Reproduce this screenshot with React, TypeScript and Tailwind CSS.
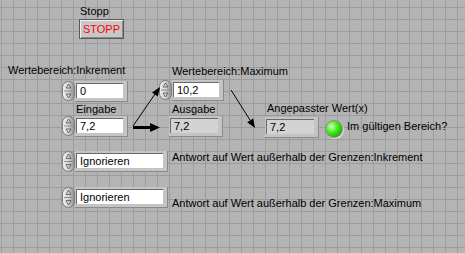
import React from "react";

function Spinner({ h = 20 }: { h?: number }) {
  return (
    <svg className="shrink-0" width={13} height={h} viewBox={`0 0 13 ${h}`}>
      <defs>
        <linearGradient id="sp" x1="0" x2="1" y1="0" y2="0">
          <stop offset="0" stopColor="#f2f2f2" />
          <stop offset="0.5" stopColor="#d2d2d2" />
          <stop offset="1" stopColor="#8a8a8a" />
        </linearGradient>
      </defs>
      <rect x={0.5} y={0.5} width={12} height={h - 1} rx={6} fill="url(#sp)" stroke="#7a7a7a" />
      <line x1={2} x2={11} y1={h / 2} y2={h / 2} stroke="#8c8c8c" />
      <path d={`M6.5 3 L9 ${h / 2 - 3} L4 ${h / 2 - 3} Z`} fill="none" stroke="#555" strokeWidth={0.8} />
      <path d={`M6.5 ${h - 3} L9 ${h / 2 + 3} L4 ${h / 2 + 3} Z`} fill="none" stroke="#555" strokeWidth={0.8} />
    </svg>
  );
}

// numeric / ring box with the classic LabVIEW bevel
function Box({ w, value, indicator = false }: { w: string; value: string; indicator?: boolean }) {
  return (
    <div className={`h-[21px] ${w} shrink-0 bg-[#c4c4c4] pl-[1px] pt-[2px] pr-[4px] pb-[3px] border-r border-b border-[#8a8a8a]`}>
      <div
        className={`h-full border-t border-l border-[#6a6a6a] pl-[3px] leading-[14px] ${
          indicator ? "bg-[#d3d3d3]" : "bg-white"
        }`}
      >
        {value}
      </div>
    </div>
  );
}

function Led() {
  return (
    <div className="h-[18px] w-[18px] shrink-0 rounded-full bg-[#8c8c8c] p-[1px] shadow-[1px_1px_0_#e0e0e0]">
      <div className="h-full w-full rounded-full bg-[radial-gradient(circle_at_35%_35%,#d8ffc0_0%,#52f02a_35%,#1fb400_75%,#138000_100%)]" />
    </div>
  );
}

export default function App() {
  return (
    <div className="relative h-[253px] w-[465px] overflow-hidden bg-[#b4b4b4] bg-[linear-gradient(to_right,#9c9c9c_1px,transparent_1px),linear-gradient(to_bottom,#9c9c9c_1px,transparent_1px)] bg-size-[12px_12px] bg-position-[1px_7px] font-['Liberation_Sans',Arial,sans-serif] text-[11px] leading-[13px] text-black">
      {/* Stopp-Taste */}
      <div className="absolute left-[79px] top-[5px] flex flex-col items-start">
        <span className="pl-[1px]">Stopp</span>
        <button className="mt-[1px] h-[20px] w-[45px] border border-[#5a5a5a] bg-[#c8c8c8] pt-[1px] text-[11px] leading-[13px] text-[#ff0000] shadow-[inset_1px_1px_0_#f0f0f0,inset_-1px_-1px_0_#8a8a8a]">
          STOPP
        </button>
      </div>

      <span className="absolute left-[8px] top-[64px] whitespace-nowrap">Wertebereich:Inkrement</span>

      {/* linke Spalte: Inkrement, Eingabe, Ringe */}
      <div className="absolute left-[62px] top-[81px] flex flex-col">
        <div className="flex">
          <Spinner />
          <Box w="w-[53px]" value="0" />
        </div>
        <span className="mt-[1px] pl-[14px]">Eingabe</span>
        <div className="flex">
          <Spinner />
          <Box w="w-[53px]" value="7,2" />
        </div>
        <div className="mt-[14px] flex">
          <Spinner h={21} />
          <Box w="w-[93px]" value="Ignorieren" />
          <span className="ml-[4px] self-start whitespace-nowrap">Antwort auf Wert außerhalb der Grenzen:Inkrement</span>
        </div>
        <div className="mt-[15px] flex">
          <Spinner h={21} />
          <Box w="w-[93px]" value="Ignorieren" />
          <span className="ml-[4px] mt-[10px] self-start whitespace-nowrap">Antwort auf Wert außerhalb der Grenzen:Maximum</span>
        </div>
      </div>

      {/* mittlere Spalte: Maximum, Ausgabe */}
      <div className="absolute left-[159px] top-[65px] flex flex-col">
        <span className="pl-[13px] whitespace-nowrap">Wertebereich:Maximum</span>
        <div className="mt-[2px] flex">
          <Spinner />
          <Box w="w-[52px]" value="10,2" />
        </div>
        <span className="mt-[2px] pl-[13px]">Ausgabe</span>
        <div className="pl-[10px]">
          <Box w="w-[54px]" value="7,2" indicator />
        </div>
      </div>

      {/* rechts: angepasster Wert + LED */}
      <div className="absolute left-[265px] top-[102px] flex flex-col">
        <span className="pl-[2px] whitespace-nowrap">Angepasster Wert(x)</span>
        <div className="mt-[2px] flex items-start">
          <Box w="w-[54px]" value="7,2" indicator />
          <div className="ml-[6px] mt-[3px]">
            <Led />
          </div>
          <span className="ml-[4px] mt-[3px] whitespace-nowrap">Im gültigen Bereich?</span>
        </div>
      </div>

      {/* Pfeile */}
      <svg className="pointer-events-none absolute left-0 top-0" width={465} height={253}>
        <line x1={133} y1={126} x2={155} y2={94} stroke="#000" strokeWidth={1} />
        <polygon points="160,87 157.8,96.4 152,92.4" fill="#000" />
        <line x1={133} y1={127.5} x2={151} y2={127.5} stroke="#000" strokeWidth={3} />
        <polygon points="160,127.5 150,123 150,132" fill="#000" />
        <line x1={231} y1={90} x2={250} y2={120} stroke="#000" strokeWidth={1} />
        <polygon points="255,128 253.2,118.5 247.2,122.3" fill="#000" />
      </svg>
    </div>
  );
}
